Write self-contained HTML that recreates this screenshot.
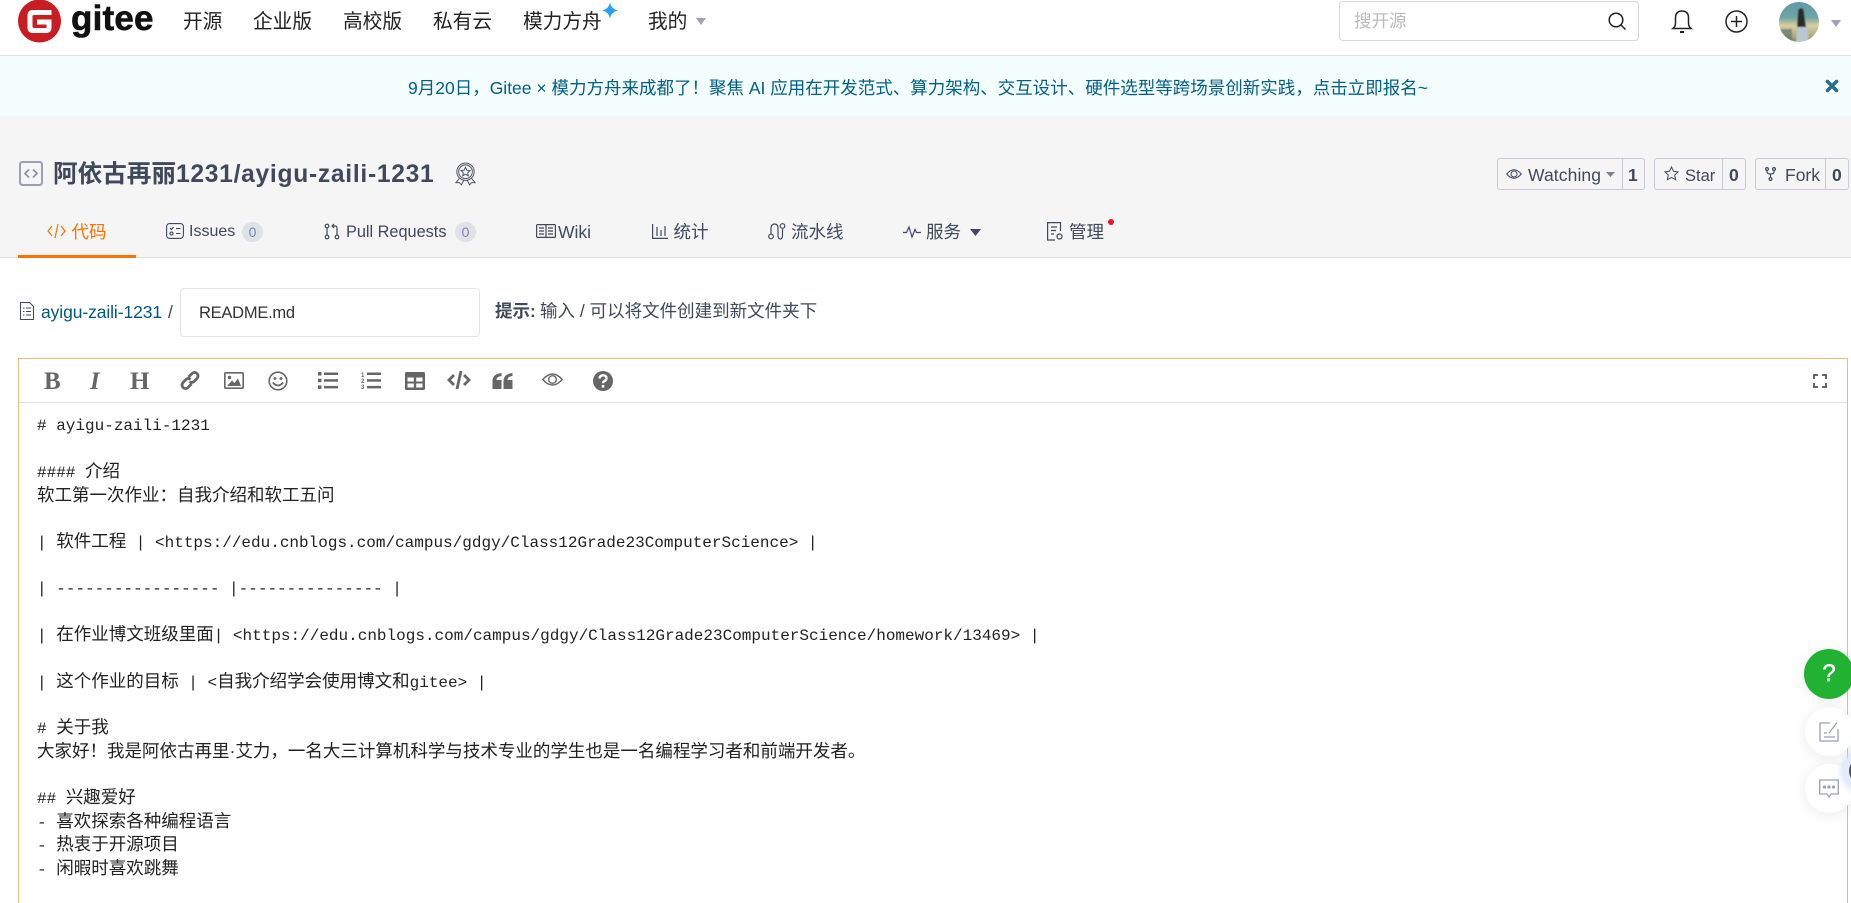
<!DOCTYPE html>
<html lang="zh-CN"><head><meta charset="utf-8"><title>Gitee</title>
<style>
html,body{margin:0;padding:0;width:1851px;height:903px;overflow:hidden;background:#fff}
body{position:relative;font-family:"Liberation Sans","Noto Sans CJK SC",sans-serif;color:#40485b}
.a{position:absolute}
.t{position:absolute;white-space:nowrap;line-height:24px}
.n{font-size:19.7px;color:#222;top:10px}
.tb{font-size:17.5px;color:#40485b;top:220px}
.tl{font-size:16.3px}
svg{position:absolute;overflow:visible}
.btn{position:absolute;top:158px;height:30px;border:1px solid #c8c9d2;border-radius:3px}
.btn i{position:absolute;top:0;bottom:0;width:1px;background:#c8c9d2}
.b17{font-size:17.5px;top:163px;color:#40485b}
.ct{font-size:17.5px;font-weight:bold;top:163px;color:#40485b}
.badge{position:absolute;top:222px;height:20px;width:21px;border-radius:10px;background:#dfe1e8;color:#7a88ab;font-size:14px;line-height:20px;text-align:center}
.l{position:absolute;left:37px;white-space:pre;font:16px/23px "Liberation Mono","Noto Sans CJK SC",monospace;color:#222}
.l i{font:normal 17.5px/0 "Noto Sans CJK SC",sans-serif}
.l u{font:normal 17.5px/0 "Liberation Sans",sans-serif;text-decoration:none}
.tool{position:absolute;font-family:"Liberation Serif",serif;color:#666;line-height:26px;top:369px;font-size:25px}
.c{position:absolute;left:1804.5px;width:49px;height:49px;border-radius:50%;background:#fff;box-shadow:0 2px 14px rgba(0,0,0,.09)}
</style></head><body>

<div class="a" style="left:0;top:0;width:1851px;height:55px;background:#fff;border-bottom:1px solid #e3e3e3"></div>
<svg style="left:18px;top:0" width="43" height="43" viewBox="0 0 43 43"><circle cx="21.5" cy="21" r="21.5" fill="#c71d23"/><path d="M33.500 10H15Q9.500 10 9.500 15.500V27.500Q9.500 33 15 33H28Q33.500 33 33.500 27.500V19.500H19V24.500H28.500V28H16Q14.500 28 14.500 26.500V16.500Q14.500 15 16 15H33.500Z" fill="#fff"/></svg>
<div class="t" style="left:71px;top:2px;font:bold 35px/34px 'Liberation Sans',sans-serif;color:#111;letter-spacing:.2px;-webkit-text-stroke:.6px #111">gitee</div>
<div class="t n" style="left:183px">开源</div>
<div class="t n" style="left:253px">企业版</div>
<div class="t n" style="left:343px">高校版</div>
<div class="t n" style="left:433px">私有云</div>
<div class="t n" style="left:523px">模力方舟</div>
<svg style="left:602px;top:2px" width="16" height="17" viewBox="0 0 16 17"><path d="M8 0Q9 7 16 8.500Q9 10 8 17Q7 10 0 8.500Q7 7 8 0Z" fill="#2aa1f0"/></svg>
<div class="t n" style="left:648px">我的</div>
<svg style="left:696px;top:18px" width="10" height="7"><path d="M0 0H10L5 7Z" fill="#9da3b5"/></svg>

<div class="a" style="left:1339px;top:1px;width:298px;height:38px;border:1px solid #d8d8d8;border-radius:4px"></div>
<div class="t" style="left:1354px;top:9px;font-size:17.5px;color:#bbb">搜开源</div>
<svg style="left:1607px;top:11px" width="20" height="20" viewBox="0 0 20 20" fill="none" stroke="#222" stroke-width="1.500"><circle cx="9" cy="9" r="6.800"/><path d="M14 14L18.500 18.500"/></svg>
<svg style="left:1671px;top:9px" width="22" height="25" viewBox="0 0 22 25" fill="none" stroke="#222" stroke-width="1.500"><path d="M2 19.500H20Q17.500 17.500 17.500 14V9Q17.500 2 11 2Q4.500 2 4.500 9V14Q4.500 17.500 2 19.500Z"/><path d="M9 23H13" stroke-width="2"/></svg>
<svg style="left:1725px;top:10px" width="23" height="23" viewBox="0 0 23 23" fill="none" stroke="#222" stroke-width="1.500"><circle cx="11.500" cy="11.500" r="10.500"/><path d="M11.500 6V17M6 11.500H17"/></svg>
<svg style="left:1779px;top:2px" width="40" height="40" viewBox="0 0 40 40"><defs><clipPath id="av"><circle cx="20" cy="20" r="20"/></clipPath><linearGradient id="avg" x1="0" y1="0" x2="0" y2="1"><stop offset="0" stop-color="#5f99a8"/><stop offset=".4" stop-color="#6fa3a6"/><stop offset=".58" stop-color="#d9cf9f"/><stop offset=".8" stop-color="#b3ad85"/><stop offset="1" stop-color="#6b7c6a"/></linearGradient><filter id="bl"><feGaussianBlur stdDeviation=".7"/></filter></defs><g clip-path="url(#av)"><g filter="url(#bl)"><rect x="-2" y="-2" width="44" height="44" fill="url(#avg)"/><rect x="0" y="27" width="13" height="13" fill="#4f6a68" opacity=".6"/><path d="M17 42L18 23H28L30 42Z" fill="#bcc6cf"/><path d="M19 11Q19 6 22 6Q25 6 25 11L27 25H18Z" fill="#2c2a2a"/></g></g></svg>
<svg style="left:1831px;top:20px" width="10" height="7"><path d="M0 0H10L5 7Z" fill="#9da3b5"/></svg>

<div class="a" style="left:0;top:56px;width:1851px;height:60px;background:#f5feff"></div>
<div class="t" style="left:408px;top:76px;font-size:17.5px;color:#005f85">9月20日，Gitee × 模力方舟来成都了！聚焦 AI 应用在开发范式、算力架构、交互设计、硬件选型等跨场景创新实践，点击立即报名~</div>
<svg style="left:1826px;top:80px" width="12" height="12" viewBox="0 0 12 12"><path d="M1.500 1.500L10.500 10.500M10.500 1.500L1.500 10.500" stroke="#2a6f88" stroke-width="3.600" stroke-linecap="round"/></svg>

<div class="a" style="left:0;top:116px;width:1851px;height:141px;background:#f5f5f5;border-bottom:1px solid #e0e0e0"></div>

<svg style="left:19px;top:161px" width="24" height="25" viewBox="0 0 24 25" fill="none"><rect x="1" y="1" width="22" height="23" rx="2.500" stroke="#9aa0b2" stroke-width="2" fill="#f5f5f5"/><path d="M10 8.500L6 12.500L10 16.500M14 8.500L18 12.500L14 16.500" stroke="#8d93a6" stroke-width="1.800"/></svg>
<div class="t" style="left:53px;top:163px;font-size:24.6px;font-weight:bold;color:#40485b">阿依古再丽<span style="letter-spacing:.72px">1231/ayigu-zaili-1231</span></div>
<svg style="left:455px;top:162px" width="21" height="24" viewBox="0 0 23 25" fill="none" stroke="#40485b" stroke-width="1"><circle cx="11.500" cy="10" r="9.500"/><circle cx="11.500" cy="10" r="7.500"/><path d="M11.500 5L13 8.300L16.500 8.700L13.900 11L14.600 14.500L11.500 12.800L8.400 14.500L9.100 11L6.500 8.700L10 8.300Z"/><path d="M5 17L1 22L5 22L7 24.500L9.500 19.500M18 17L22 22L18 22L16 24.500L13.500 19.500"/></svg>

<div class="btn" style="left:1497px;width:146px"><i style="left:124px"></i></div>
<svg style="left:1506px;top:168px" width="16" height="12" viewBox="0 0 16 12" fill="none" stroke="#40485b" stroke-width="1"><path d="M.7 6Q8 -2.500 15.300 6Q8 14.500 .7 6Z"/><circle cx="8" cy="6" r="3"/></svg>
<div class="t b17" style="left:1528px;letter-spacing:.1px">Watching</div>
<svg style="left:1606px;top:172px" width="9" height="5"><path d="M0 0H9L4.500 5Z" fill="#7c8192"/></svg>
<div class="t ct" style="left:1628px">1</div>
<div class="btn" style="left:1654px;width:90px"><i style="left:67px"></i></div>
<svg style="left:1664px;top:166px" width="15" height="15" viewBox="0 0 15 15" fill="none" stroke="#40485b" stroke-width="1"><path d="M7.500 1L9.500 5.300L14 5.900L10.700 9L11.600 13.700L7.500 11.400L3.400 13.700L4.300 9L1 5.900L5.500 5.300Z"/></svg>
<div class="t b17" style="left:1685px;top:164px;font-size:16.5px">Star</div>
<div class="t ct" style="left:1729px">0</div>
<div class="btn" style="left:1755px;width:92px"><i style="left:69px"></i></div>
<svg style="left:1765px;top:167px" width="11" height="14" viewBox="0 0 11 14" fill="none" stroke="#40485b" stroke-width="1.200"><circle cx="2" cy="2" r="1.400"/><circle cx="9" cy="2" r="1.400"/><circle cx="5.500" cy="12" r="1.400"/><path d="M2 3.500V5Q2 7 5.500 7Q9 7 9 5V3.500M5.500 7V10.500"/></svg>
<div class="t b17" style="left:1785px">Fork</div>
<div class="t ct" style="left:1832px">0</div>

<div class="a" style="left:18px;top:255px;width:118px;height:3px;background:#fe7300"></div>
<svg style="left:47px;top:223px" width="19" height="16" viewBox="0 0 19 16" fill="none" stroke="#fe7300" stroke-width="1.200"><path d="M5 3L1 8L5 13M14 3L18 8L14 13M11 1L8 15"/></svg>
<div class="t tb" style="left:71.500px;color:#fe7300">代码</div>
<svg style="left:166px;top:223px" width="18" height="16" viewBox="0 0 18 16" fill="none" stroke="#40485b" stroke-width="1.100"><rect x=".6" y=".6" width="16.800" height="14.800" rx="3"/><path d="M4 5L5.500 6.500L7.500 4M10 5.500H14.500M10 10.500H14.500"/><circle cx="5.500" cy="10.500" r="1.500"/></svg>
<div class="t tb" style="left:189px;font-size:16px">Issues</div><div class="badge" style="left:242px">0</div>
<svg style="left:324px;top:223px" width="16" height="17" viewBox="0 0 16 17" fill="none" stroke="#40485b" stroke-width="1.200"><circle cx="3" cy="3" r="1.800"/><circle cx="3" cy="14" r="1.800"/><circle cx="13" cy="14" r="1.800"/><path d="M3 5V12M13 12V5Q13 3 11 3H8M10 1L8 3L10 5"/></svg>
<div class="t tb tl" style="left:346px">Pull Requests</div><div class="badge" style="left:455px">0</div>
<svg style="left:536px;top:224px" width="20" height="14" viewBox="0 0 20 14" fill="none" stroke="#40485b" stroke-width="1.200"><rect x=".6" y=".6" width="18.800" height="12.800" rx="1"/><path d="M10 1V13M3 4H8M3 7H8M3 10H8M12 4H17M12 7H17M12 10H17"/></svg>
<div class="t tb" style="left:558px">Wiki</div>
<svg style="left:652px;top:224px" width="16" height="15" viewBox="0 0 16 15" fill="none" stroke="#40485b" stroke-width="1.200"><path d="M.6 0V14.400H16M5 3V12M9 6V12M13 2V12"/></svg>
<div class="t tb" style="left:673.500px">统计</div>
<svg style="left:768px;top:223px" width="18" height="17" viewBox="0 0 18 17" fill="none" stroke="#40485b" stroke-width="1.200"><circle cx="3" cy="13.500" r="2.300"/><circle cx="14.500" cy="3" r="2.300"/><path d="M3 11V6Q3 1 6.500 1Q10 1 10 5V12Q10 16 12.500 16Q14.500 16 14.500 12V6"/></svg>
<div class="t tb" style="left:791px">流水线</div>
<svg style="left:903px;top:226px" width="18" height="12" viewBox="0 0 18 12" fill="none" stroke="#40485b" stroke-width="1.200"><path d="M0 6.500H3.500L6 1L9 11L12 3.500L13.500 6.500H18"/></svg>
<div class="t tb" style="left:926px">服务</div>
<svg style="left:970px;top:229px" width="11" height="7"><path d="M0 0H11L5.500 7Z" fill="#40485b"/></svg>
<svg style="left:1047px;top:222px" width="17" height="19" viewBox="0 0 17 19" fill="none" stroke="#40485b" stroke-width="1.200"><path d="M8 18H.6V.6H13.500V9M4 5H10M4 8.500H9M4 12H7"/><circle cx="12.500" cy="14.500" r="2.500"/></svg>
<div class="t tb" style="left:1069px">管理</div>
<div class="a" style="left:1108px;top:219px;width:6px;height:6px;border-radius:50%;background:#f0102a"></div>

<svg style="left:20px;top:302px" width="14" height="18" viewBox="0 0 14 18" fill="none" stroke="#40485b" stroke-width="1"><path d="M.5 .5H9.500L13.500 4.500V17.500H.5Z"/><path d="M3 6H4.500M6 6H11M3 9.500H4.500M6 9.500H11M3 13H4.500M6 13H11"/></svg>
<div class="t" style="left:41px;top:300px;font-size:17.5px;color:#005980;letter-spacing:-.1px">ayigu-zaili-1231</div>
<div class="t" style="left:168px;top:300px;font-size:17.5px;color:#40485b">/</div>
<div class="a" style="left:180px;top:288px;width:298px;height:47px;border:1px solid #e3e4ec;border-radius:4px;background:#fff"></div>
<div class="t" style="left:199px;top:301px;font-size:16.5px;color:#333;letter-spacing:-.25px">README.md</div>
<div class="t" style="left:495px;top:299px;font-size:17.5px;font-weight:bold;color:#40485b">提示:</div>
<div class="t" style="left:540px;top:299px;font-size:17.5px;color:#40485b">输入 / 可以将文件创建到新文件夹下</div>

<div class="a" style="left:18px;top:358px;width:1830px;height:545px;border:1px solid #f9b77a;border-bottom:0;box-sizing:border-box"></div>
<div class="a" style="left:19px;top:402px;width:1828px;height:1px;background:#e3e3e3"></div>

<div class="tool" style="left:44px;font-weight:bold">B</div>
<div class="tool" style="left:90px;font-style:italic;font-weight:bold">I</div>
<div class="tool" style="left:130px;font-weight:bold;font-size:25px">H</div>
<svg style="left:180px;top:370px" width="20" height="21" viewBox="0 0 20 21" fill="none" stroke="#666" stroke-width="2.800"><path d="M8.500 7L12 3.500Q14.500 1.300 17 3.500Q19 6 17 8.500L14 11.500Q11.500 13.500 9.500 11.500"/><path d="M11.500 14L8 17.500Q5.500 19.700 3 17.500Q1 15 3 12.500L6 9.500Q8.500 7.500 10.500 9.500"/></svg>
<svg style="left:224px;top:372px" width="20" height="17" viewBox="0 0 20 17"><rect x=".8" y=".8" width="18.400" height="15.400" rx="1" fill="none" stroke="#666" stroke-width="1.600"/><circle cx="5.500" cy="5.500" r="1.700" fill="#666"/><path d="M3 14L8 8.500L10.500 11L14 6.500L17 14Z" fill="#666"/></svg>
<svg style="left:268px;top:371px" width="20" height="20" viewBox="0 0 20 20" fill="none" stroke="#666" stroke-width="1.600"><circle cx="10" cy="10" r="8.800"/><path d="M4.800 11.500Q10 17.500 15.200 11.500" stroke-width="1.800"/><path d="M5.500 7.500H8.500M7 6V9M11.500 7.500H14.500M13 6V9" stroke-width="1.400"/></svg>
<svg style="left:318px;top:372px" width="20" height="17" viewBox="0 0 20 17" fill="#666"><rect y="0" width="3.500" height="3.500"/><rect y="6.700" width="3.500" height="3.500"/><rect y="13.400" width="3.500" height="3.500"/><rect x="6" y=".5" width="14" height="2.500"/><rect x="6" y="7.200" width="14" height="2.500"/><rect x="6" y="13.900" width="14" height="2.500"/></svg>
<svg style="left:361px;top:372px" width="20" height="17" viewBox="0 0 20 17" fill="#666"><rect x="6" y=".5" width="14" height="2.500"/><rect x="6" y="7.200" width="14" height="2.500"/><rect x="6" y="13.900" width="14" height="2.500"/><text x="0" y="5" font-family="Liberation Sans" font-size="6" font-weight="bold">1</text><text x="0" y="11" font-family="Liberation Sans" font-size="6" font-weight="bold">2</text><text x="0" y="17" font-family="Liberation Sans" font-size="6" font-weight="bold">3</text></svg>
<svg style="left:405px;top:372px" width="20" height="18" viewBox="0 0 20 18"><rect width="20" height="18" rx="1.500" fill="#666"/><rect x="2.500" y="5.500" width="6.300" height="4" fill="#fff"/><rect x="11.200" y="5.500" width="6.300" height="4" fill="#fff"/><rect x="2.500" y="11.500" width="6.300" height="4" fill="#fff"/><rect x="11.200" y="11.500" width="6.300" height="4" fill="#fff"/></svg>
<svg style="left:447px;top:370px" width="24" height="20" viewBox="0 0 24 20" fill="none" stroke="#666" stroke-width="2.800"><path d="M7 5L2 10L7 15M17 5L22 10L17 15M14 1L10 19"/></svg>
<svg style="left:492px;top:372px" width="21" height="17" viewBox="0 0 21 17" fill="#666"><path d="M9.500 1V4Q4.500 4.500 4.500 8H9.500V17H.5V9Q.5 2 9.500 1ZM20.500 1V4Q15.500 4.500 15.500 8H20.500V17H11.500V9Q11.500 2 20.500 1Z"/></svg>
<svg style="left:542px;top:372px" width="21" height="15" viewBox="0 0 21 15" fill="none" stroke="#666" stroke-width="1.400"><path d="M.8 7.500Q10.500 -3.500 20.200 7.500Q10.500 18.500 .8 7.500Z"/><circle cx="10.500" cy="7.500" r="3.800"/></svg>
<svg style="left:593px;top:371px" width="20" height="20" viewBox="0 0 20 20"><circle cx="10" cy="10" r="10" fill="#666"/><path d="M6.500 7.500Q6.800 4.300 10 4.300Q13.500 4.300 13.500 7.200Q13.500 9 11.500 10Q10 10.800 10 12.300" fill="none" stroke="#fff" stroke-width="2.400"/><rect x="8.700" y="14" width="2.600" height="2.600" fill="#fff"/></svg>
<svg style="left:1813px;top:374px" width="14" height="14" viewBox="0 0 14 14" fill="none" stroke="#555" stroke-width="1.800"><path d="M1 5V1H5M9 1H13V5M13 9V13H9M5 13H1V9"/></svg>

<div class="l" style="top:415px"># ayigu-zaili-1231</div>
<div class="l" style="top:462px">#### <i>介绍</i></div>
<div class="l" style="top:486px"><i>软工第一次作业：自我介绍和软工五问</i></div>
<div class="l" style="top:532px">| <i>软件工程</i> | &lt;https://edu.cnblogs.com/campus/gdgy/Class12Grade23ComputerScience&gt; |</div>
<div class="l" style="top:578px">| ----------------- |--------------- |</div>
<div class="l" style="top:625px">| <i>在作业博文班级里面</i>| &lt;https://edu.cnblogs.com/campus/gdgy/Class12Grade23ComputerScience/homework/13469&gt; |</div>
<div class="l" style="top:672px">| <i>这个作业的目标</i> | &lt;<i>自我介绍学会使用博文和</i>gitee&gt; |</div>
<div class="l" style="top:718px"># <i>关于我</i></div>
<div class="l" style="top:742px"><i>大家好！我是阿依古再里</i><u>·</u><i>艾力，一名大三计算机科学与技术专业的学生也是一名编程学习者和前端开发者。</i></div>
<div class="l" style="top:788px">## <i>兴趣爱好</i></div>
<div class="l" style="top:812px">- <i>喜欢探索各种编程语言</i></div>
<div class="l" style="top:835px">- <i>热衷于开源项目</i></div>
<div class="l" style="top:859px">- <i>闲暇时喜欢跳舞</i></div>

<div class="c" style="top:706.500px"></div>
<div class="c" style="top:763.500px"></div>
<div class="a" style="left:1849px;top:757px;width:28px;height:28px;border-radius:50%;background:#555;box-shadow:0 0 0 6px #e3ebfc,0 0 8px 7px #ccdcfb"></div>
<div class="a" style="left:1804px;top:649px;width:50px;height:50px;border-radius:50%;background:#22b232;color:#fff;font:24px/50px 'Liberation Sans',sans-serif;-webkit-text-stroke:.5px #fff;text-align:center;box-shadow:0 2px 14px rgba(0,0,0,.08)">?</div>
<svg style="left:1819px;top:721px" width="20" height="21" viewBox="0 0 20 21" fill="none" stroke="#9a9fb8" stroke-width="1.300"><path d="M11 2H1V20H19V8"/><path d="M10 12L18 1.500" /><path d="M5 12H8M5 16H16"/></svg>
<svg style="left:1819px;top:779px" width="20" height="20" viewBox="0 0 20 20" fill="none" stroke="#9a9fb8" stroke-width="1.300"><path d="M.7 1H19.300V15H12L10 18L8 15H.7Z"/><circle cx="5.500" cy="8" r="1" fill="#9a9fb8"/><circle cx="10" cy="8" r="1" fill="#9a9fb8"/><circle cx="14.500" cy="8" r="1" fill="#9a9fb8"/></svg>
</body></html>
